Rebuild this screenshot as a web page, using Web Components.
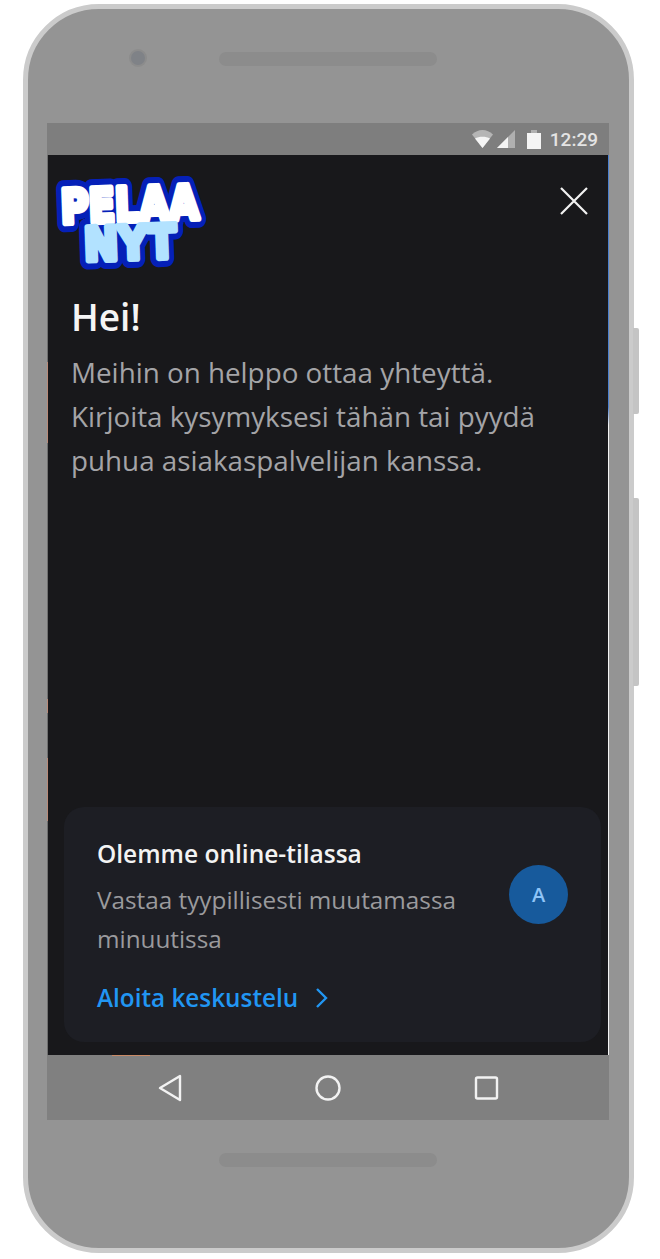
<!DOCTYPE html>
<html lang="fi">
<head>
<meta charset="utf-8">
<title>Pelaa Nyt</title>
<style>
    html, body { margin: 0; padding: 0; background: #fff; }
    body { width: 660px; height: 1259px; overflow: hidden; font-family: "Open Sans", "Noto Sans", sans-serif; }
</style>
</head>
<body>
<phone-frame>
    <status-bar slot="top" time="12:29"></status-bar>
    <chat-welcome>
        <brand-logo slot="logo"></brand-logo>
        <contact-card slot="card" title="Olemme online-tilassa" link="Aloita keskustelu" avatar="A">
            Vastaa tyypillisesti muutamassa minuutissa
        </contact-card>
    </chat-welcome>
    <nav-bar slot="bottom"></nav-bar>
</phone-frame>

<script>
class PhoneFrame extends HTMLElement {
    constructor() {
        super();
        this.attachShadow({ mode: "open" });
        this.shadowRoot.innerHTML = `
            <style>
                :host { display: block; width: 617px; height: 1250px; margin: 4px 0 0 23px; position: relative; }
                .body {
                    box-sizing: border-box;
                    width: 611px;
                    height: 1249px;
                    border-radius: 76px;
                    border: 5px solid #cbcbcb;
                    background: #949494;
                    padding: 0 0 0 19px;
                    display: flex;
                    flex-direction: column;
                }
                .speaker-row { height: 114px; position: relative; flex: none; }
                .camera { position: absolute; left: 84px; top: 42px; width: 14px; height: 14px; border-radius: 50%; background: #7f8287; box-shadow: 0 0 0 2px #8c8c8c; }
                .speaker { position: absolute; left: 172px; top: 43px; width: 218px; height: 14px; border-radius: 7px; background: #8c8c8c; }
                .speaker.low { top: 33px; }
                .screen { width: 562px; height: 997px; flex: none; display: flex; flex-direction: column; }
                .chin { flex: 1; position: relative; }
                .side { position: absolute; left: 610px; width: 6px; background: #c4c4c4; border-radius: 0 2px 2px 0; }
            </style>
            <div class="body">
                <div class="speaker-row"><div class="camera"></div><div class="speaker"></div></div>
                <div class="screen">
                    <slot name="top"></slot>
                    <slot></slot>
                    <slot name="bottom"></slot>
                </div>
                <div class="chin"><div class="speaker low"></div></div>
            </div>
            <div class="side" style="top:324px;height:86px"></div>
            <div class="side" style="top:494px;height:188px"></div>
        `;
    }
}

class StatusBar extends HTMLElement {
    constructor() {
        super();
        this.attachShadow({ mode: "open" });
        this.shadowRoot.innerHTML = `
            <style>
                :host { display: flex; align-items: center; justify-content: flex-end; height: 32px; background: #7e7e7e; color: #e4e4e4; padding-right: 11px; flex: none; }
                span { font: 500 19px Roboto, sans-serif; margin-left: 9px; }
                svg { display: block; }
                .battery { margin-left: 10px; }
            </style>
            <svg width="45" height="20" viewBox="0 0 45 20">
                <path d="M0 5.5C6-.5 15-.5 21 5.5L10.5 19z" fill="#b5b5b5"/>
                <path d="M3 9.5C7 7 14 7 18 9.5L10.5 19z" fill="#f4f4f4"/>
                <path d="M25 19L43 1v18z" fill="#b0b0b0"/>
                <path d="M25 19L36 8v11z" fill="#f4f4f4"/>
            </svg>
            <svg class="battery" width="14" height="19" viewBox="0 0 14 19"><path d="M4 0h6v3h4v16H0V3h4z" fill="#f4f4f4"/><path d="M4 0h6v3H4z" fill="#b0b0b0"/></svg>
            <span>${this.getAttribute("time")}</span>
        `;
    }
}

class NavBar extends HTMLElement {
    constructor() {
        super();
        this.attachShadow({ mode: "open" });
        this.shadowRoot.innerHTML = `
            <style>
                :host {
                    display: flex; align-items: center; height: 65px; padding-left: 110px; gap: 132px; flex: none;
                    background: linear-gradient(#c98a66, #c98a66) 65px 0 / 38px 1px no-repeat, #808080;
                }
                svg { display: block; fill: none; stroke: #f2f2f2; stroke-width: 2.4; stroke-linejoin: round; }
            </style>
            <svg width="26" height="28" viewBox="0 0 26 28"><path d="M23 2v24L3 14z"/></svg>
            <svg width="26" height="28" viewBox="0 0 26 28"><circle cx="13" cy="14" r="11.5"/></svg>
            <svg width="26" height="28" viewBox="0 0 26 28"><rect x="3" y="3.5" width="21" height="21" rx="1.5"/></svg>
        `;
    }
}

class BrandLogo extends HTMLElement {
    constructor() {
        super();
        this.attachShadow({ mode: "open" });
        // real text with a thick outline, the font is the closest heavy one we have
        this.shadowRoot.innerHTML = `
            <style>
                :host { display: block; width: 160px; height: 94px; }
                svg { display: block; overflow: visible; }
                text { font-family: "DejaVu Sans", sans-serif; font-weight: 700; stroke-linejoin: round; paint-order: stroke; }
                .halo { stroke: #0520b8; stroke-width: 18px; fill: #0520b8; }
                .inner { stroke-width: 6px; }
                .a { fill: #fff; stroke: #fff; }
                .b { fill: #b2e2ff; stroke: #b2e2ff; }
            </style>
            <svg width="160" height="94" viewBox="0 0 160 94">
                <g transform="rotate(-2 80 40)">
                    <text class="halo" x="9" y="46" font-size="47" textLength="138" lengthAdjust="spacingAndGlyphs">PELAA</text>
                    <text class="halo" x="31" y="84" font-size="46" textLength="92" lengthAdjust="spacingAndGlyphs">NYT</text>
                    <text class="inner a" x="9" y="46" font-size="47" textLength="138" lengthAdjust="spacingAndGlyphs">PELAA</text>
                    <text class="inner b" x="31" y="84" font-size="46" textLength="92" lengthAdjust="spacingAndGlyphs">NYT</text>
                </g>
            </svg>
        `;
    }
}

class ContactCard extends HTMLElement {
    constructor() {
        super();
        this.attachShadow({ mode: "open" });
        this.shadowRoot.innerHTML = `
            <style>
                :host { display: flex; align-items: flex-start; box-sizing: border-box; height: 235px; margin: 0 7px 13px 16px; padding: 29px 33px 0 33px; background: #1d1e24; border-radius: 20px; }
                .text { flex: 1; min-width: 0; }
                h3 { margin: 0; font-size: 24.5px; line-height: 36px; font-weight: 600; color: #f3f3f3; }
                p { margin: 8px 0 0; font-size: 24.3px; line-height: 39px; color: #9a9a9d; width: 372px; }
                a { display: flex; align-items: center; gap: 17px; margin-top: 21px; font-size: 24.3px; line-height: 38px; font-weight: 600; color: #2196f3; }
                svg { display: block; }
                .avatar { flex: none; width: 59px; height: 59px; margin-top: 29px; border-radius: 50%; background: #175a9c; color: #8fc4f7; font-size: 20px; font-weight: 600; display: flex; align-items: center; justify-content: center; }
            </style>
            <div class="text">
                <h3>${this.getAttribute("title")}</h3>
                <p><slot></slot></p>
                <a>${this.getAttribute("link")}
                    <svg width="14" height="22" viewBox="0 0 14 22" fill="none" stroke="#2196f3" stroke-width="2.4"><path d="M2 2l9 9-9 9"/></svg>
                </a>
            </div>
            <div class="avatar">${this.getAttribute("avatar")}</div>
        `;
    }
}

class ChatWelcome extends HTMLElement {
    constructor() {
        super();
        this.attachShadow({ mode: "open" });
        this.shadowRoot.innerHTML = `
            <style>
                :host {
                    display: flex; flex-direction: column; height: 900px; box-sizing: border-box; flex: none;
                    padding: 0 1px;
                    background:
                        linear-gradient(#4a7fd0 0 28%, #f4f4f4 30%) right / 1px 100% no-repeat,
                        linear-gradient(#6f6f6f 0 23%, #b98a78 23% 32%, #6f6f6f 32% 60.5%, #b98a78 60.5% 62%, #6f6f6f 62% 67%, #b98a78 67% 74%, #6f6f6f 74%) left / 1px 100% no-repeat,
                        #18181b;
                }
                .head { display: flex; justify-content: space-between; padding: 20px 20px 0 4px; height: 137px; box-sizing: border-box; flex: none; }
                .close { width: 28px; height: 28px; margin-top: 12px; }
                .intro { flex: 1; padding: 0 23px; }
                h1 { margin: 0; font-size: 37px; line-height: 50px; font-weight: 600; color: #f5f5f5; }
                p { margin: 8px 0 0; font-size: 27.8px; line-height: 44px; color: #a4a4a7; }
            </style>
            <div class="head">
                <slot name="logo"></slot>
                <svg class="close" viewBox="0 0 28 28" fill="none" stroke="#f2f2f2" stroke-width="2.2"><path d="M1 1l26 26M27 1L1 27"/></svg>
            </div>
            <div class="intro">
                <h1>Hei!</h1>
                <p>Meihin on helppo ottaa yhteyttä.<br>Kirjoita kysymyksesi tähän tai pyydä<br>puhua asiakaspalvelijan kanssa.</p>
            </div>
            <slot name="card"></slot>
        `;
    }
}

customElements.define("phone-frame", PhoneFrame);
customElements.define("status-bar", StatusBar);
customElements.define("nav-bar", NavBar);
customElements.define("brand-logo", BrandLogo);
customElements.define("contact-card", ContactCard);
customElements.define("chat-welcome", ChatWelcome);
</script>
</body>
</html>
